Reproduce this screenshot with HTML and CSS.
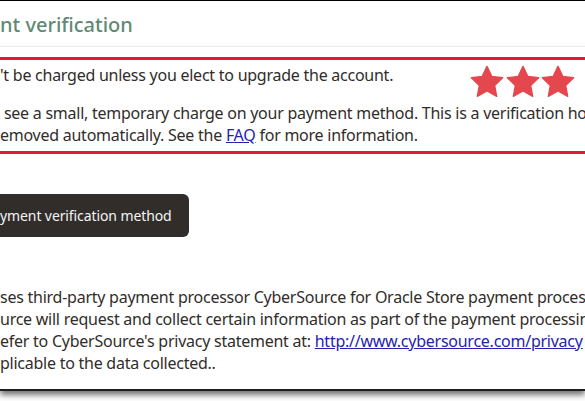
FILE: index.html
```html
<!DOCTYPE html>
<html lang="en">
<head>
<meta charset="utf-8">
<title>Payment verification</title>
<link rel="stylesheet" href="styles.css">
</head>
<body>
<div class="frame">
  <h1 class="title">nt verification</h1>
  <div class="alert">
    <div class="alert-row">
      <p class="line">'t be charged unless you elect to upgrade the account.</p>
      <div class="stars">
        <svg viewBox="2 2 20 20" width="34" height="34"><path d="M12 2.8l2.8 5.9 6.4.8-4.7 4.5 1.2 6.4L12 17.3l-5.7 3.1 1.2-6.4-4.7-4.5 6.4-.8z"/></svg>
        <svg viewBox="2 2 20 20" width="34" height="34"><path d="M12 2.8l2.8 5.9 6.4.8-4.7 4.5 1.2 6.4L12 17.3l-5.7 3.1 1.2-6.4-4.7-4.5 6.4-.8z"/></svg>
        <svg viewBox="2 2 20 20" width="34" height="34"><path d="M12 2.8l2.8 5.9 6.4.8-4.7 4.5 1.2 6.4L12 17.3l-5.7 3.1 1.2-6.4-4.7-4.5 6.4-.8z"/></svg>
      </div>
    </div>
    <p class="line">&nbsp;see a small, temporary charge on your payment method. This is a verification hold</p>
    <p class="line">emoved automatically. See the <a href="#">FAQ</a> for more information.</p>
  </div>
  <button class="btn" type="button">yment verification method</button>
  <div class="legal">
    <p class="line">ses third-party payment processor CyberSource for Oracle Store payment processing.</p>
    <p class="line">urce will request and collect certain information as part of the payment processing</p>
    <p class="line">efer to CyberSource's privacy statement at: <a href="#">http://www.cybersource.com/privacy</a> for</p>
    <p class="line">plicable to the data collected..</p>
  </div>
</div>
</body>
</html>
```
FILE: styles.css
```css
html, body {
  margin: 0;
  padding: 0;
  background: #ffffff;
}
body {
  width: 585px;
  height: 401px;
  overflow: hidden;
  font-family: "Noto Sans", "Open Sans", sans-serif;
  color: #312d2a;
}
.frame {
  height: 388px;
  border-top: 1px solid #000;
  border-bottom: 2px solid #1e1e1e;
  box-shadow: 0 4px 6px rgba(0, 0, 0, 0.55);
  overflow: hidden;
  background: #fff;
}
.title {
  margin: 0;
  height: 46px;
  box-sizing: border-box;
  padding-top: 11px;
  font-size: 20px;
  line-height: 26px;
  font-weight: 500;
  color: #5f8a74;
  border-bottom: 1px solid #ebebeb;
  white-space: nowrap;
}
.alert {
  margin-top: 10px;
  border-top: 3px solid #e3173e;
  border-bottom: 3px solid #e3173e;
  padding: 4px 10px 5px 0;
}
.alert-row {
  display: flex;
  justify-content: space-between;
  align-items: flex-start;
  height: 38px;
}
.line {
  margin: 0;
  font-size: 16px;
  line-height: 22px;
  letter-spacing: -0.25px;
  white-space: nowrap;
}
.stars {
  display: flex;
  gap: 1.5px;
  margin-top: 1px;
  fill: #e5474e;
}
.stars svg path {
  stroke: #e5474e;
  stroke-width: 0.8;
  stroke-linejoin: round;
}
a {
  color: #2323b0;
  text-decoration: underline;
}
.btn {
  display: block;
  margin-top: 40px;
  height: 43px;
  padding: 0 17px 0 0;
  border: none;
  border-radius: 0 6px 6px 0;
  background: #312d2b;
  color: #f4f4f4;
  font-family: "Noto Sans", "Open Sans", sans-serif;
  font-size: 14px;
  line-height: 20px;
  letter-spacing: -0.1px;
  white-space: nowrap;
}
.legal {
  margin-top: 49px;
}
```
